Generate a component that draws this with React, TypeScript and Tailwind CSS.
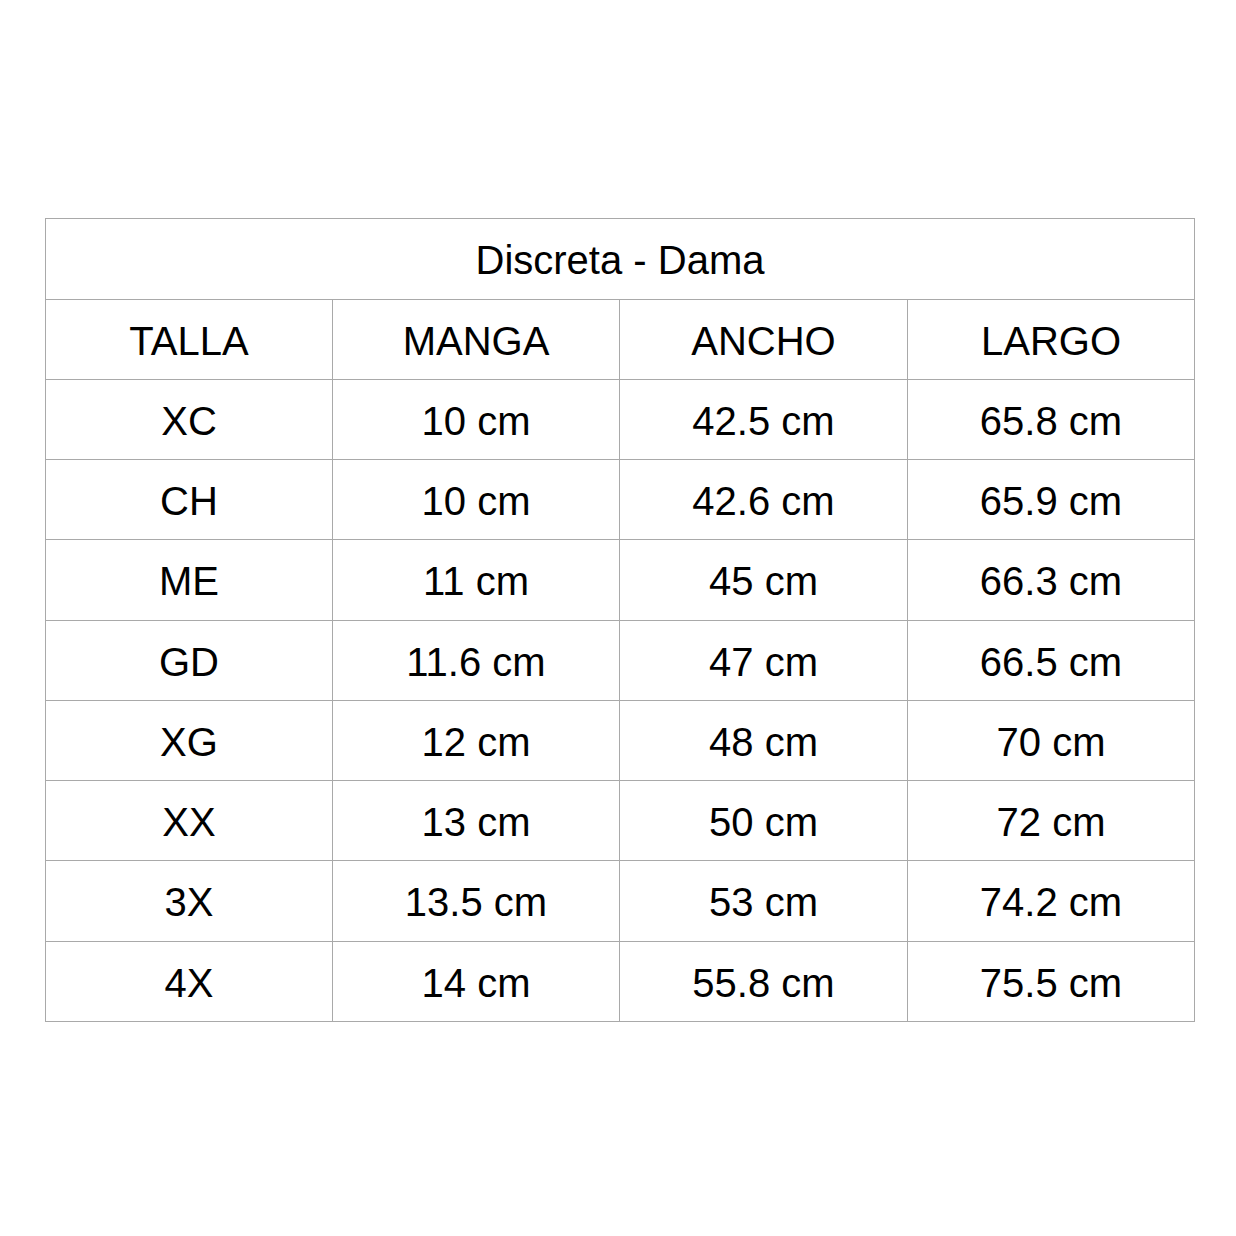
import React from "react";

const rows: string[][] = [
  ["TALLA", "MANGA", "ANCHO", "LARGO"],
  ["XC", "10 cm", "42.5 cm", "65.8 cm"],
  ["CH", "10 cm", "42.6 cm", "65.9 cm"],
  ["ME", "11 cm", "45 cm", "66.3 cm"],
  ["GD", "11.6 cm", "47 cm", "66.5 cm"],
  ["XG", "12 cm", "48 cm", "70 cm"],
  ["XX", "13 cm", "50 cm", "72 cm"],
  ["3X", "13.5 cm", "53 cm", "74.2 cm"],
  ["4X", "14 cm", "55.8 cm", "75.5 cm"],
];

const heights = ["h-[80px]", "h-[80px]", "h-[80px]", "h-[81px]", "h-[80px]", "h-[80px]", "h-[80px]", "h-[81px]", "h-[80px]"];

export default function App() {
  return (
    <div
      className="w-[1236px] h-[1236px] bg-white pt-[218px] pl-[45px] text-black"
      style={{ fontFamily: '"Liberation Sans", Arial, sans-serif' }}
    >
      <div className="w-[1150px] border-t border-l border-[#a9a9a9]">
        <div className="h-[81px] pt-[2px] border-r border-b border-[#a9a9a9] flex items-center justify-center text-[40px] leading-none">
          Discreta - Dama
        </div>
        {rows.map((r, i) => (
          <div key={i} className={`grid grid-cols-[287px_287px_288px_287px] ${heights[i]}`}>
            {r.map((c, j) => (
              <div
                key={j}
                className="border-r border-b border-[#a9a9a9] pt-[2px] flex items-center justify-center text-[40px] leading-none"
              >
                {c}
              </div>
            ))}
          </div>
        ))}
      </div>
    </div>
  );
}
